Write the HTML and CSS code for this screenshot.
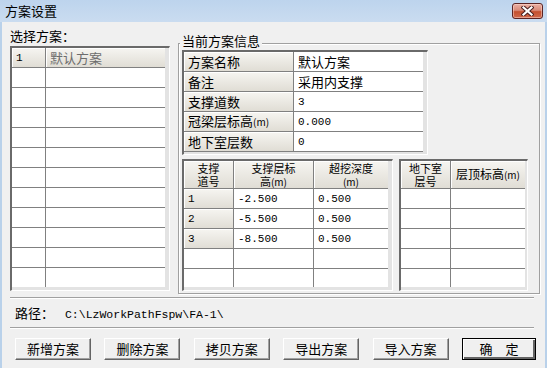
FILE: index.html
```html
<!DOCTYPE html>
<html lang="zh-CN">
<head>
  <meta charset="UTF-8" />
  <title>方案设置</title>
  <link rel="stylesheet" href="styles.css">
</head>
<body>
<div class="window">

  <!-- Title bar -->
  <div class="titlebar">
    <span class="title">方案设置</span>
    <button class="close-btn">
      <svg width="13" height="10" viewBox="0 0 13 10">
        <path d="M2.5 1.5 L10.5 8.5 M10.5 1.5 L2.5 8.5" stroke="#4a2020" stroke-width="4.2" stroke-linecap="square"/>
        <path d="M2.5 1.5 L10.5 8.5 M10.5 1.5 L2.5 8.5" stroke="#fff" stroke-width="2.2" stroke-linecap="square"/>
      </svg>
    </button>
  </div>

  <div class="main">
    <!-- Plan list -->
    <div class="plan-list">
      <div class="label">选择方案：</div>
      <div class="grid">
        <div class="grid-body plans-body">
          <table>
            <tr>
              <td class="fixed num w34">1</td>
              <td class="fixed muted w119">默认方案</td>
            </tr>
            <tr><td></td><td></td></tr>
            <tr><td></td><td></td></tr>
            <tr><td></td><td></td></tr>
            <tr><td></td><td></td></tr>
            <tr><td></td><td></td></tr>
            <tr><td></td><td></td></tr>
            <tr><td></td><td></td></tr>
            <tr><td></td><td></td></tr>
            <tr><td></td><td></td></tr>
            <tr><td></td><td></td></tr>
            <tr><td></td><td></td></tr>
          </table>
        </div>
      </div>
    </div>

    <!-- Current plan -->
    <div class="group">
      <span class="group-title">当前方案信息</span>

      <div class="grid info-grid">
        <div class="grid-body info-body">
          <table>
            <tr><td class="fixed w110">方案名称</td><td class="w129">默认方案</td></tr>
            <tr><td class="fixed">备注</td><td>采用内支撑</td></tr>
            <tr><td class="fixed">支撑道数</td><td class="num">3</td></tr>
            <tr><td class="fixed">冠梁层标高<span class="unit">(m)</span></td><td class="num">0.000</td></tr>
            <tr><td class="fixed">地下室层数</td><td class="num">0</td></tr>
          </table>
        </div>
      </div>

      <div class="lower">
        <div class="grid">
          <div class="grid-body lower-body">
            <table>
              <tr class="head-row">
                <td class="fixed head w50">支撑<br>道号</td>
                <td class="fixed head w80">支撑层标<br>高<span class="unit">(m)</span></td>
                <td class="fixed head w74">超挖深度<br><span class="unit">(m)</span></td>
              </tr>
              <tr><td class="fixed num">1</td><td class="num">-2.500</td><td class="num">0.500</td></tr>
              <tr><td class="fixed num">2</td><td class="num">-5.500</td><td class="num">0.500</td></tr>
              <tr><td class="fixed num">3</td><td class="num">-8.500</td><td class="num">0.500</td></tr>
              <tr><td></td><td></td><td></td></tr>
              <tr><td></td><td></td><td></td></tr>
            </table>
          </div>
        </div>

        <div class="grid grid-narrow">
          <div class="grid-body lower-body">
            <table>
              <tr class="head-row">
                <td class="fixed head w50">地下室<br>层号</td>
                <td class="fixed head single w74">层顶标高<span class="unit">(m)</span></td>
              </tr>
              <tr><td></td><td></td></tr>
              <tr><td></td><td></td></tr>
              <tr><td></td><td></td></tr>
              <tr><td></td><td></td></tr>
              <tr><td></td><td></td></tr>
            </table>
          </div>
        </div>
      </div>
    </div>
  </div>

  <div class="separator"></div>

  <div class="path-row">
    <span>路径：</span>
    <span class="path">C:\LzWorkPathFspw\FA-1\</span>
  </div>

  <div class="separator"></div>

  <!-- Buttons -->
  <div class="buttons">
    <button class="btn">新增方案</button>
    <button class="btn">删除方案</button>
    <button class="btn">拷贝方案</button>
    <button class="btn">导出方案</button>
    <button class="btn">导入方案</button>
    <button class="btn btn-default">确　定</button>
  </div>

</div>
</body>
</html>
```

FILE: styles.css
```css
* {
  box-sizing: border-box;
  margin: 0;
  padding: 0;
}

body {
  width: 547px;
  height: 368px;
  overflow: hidden;
  font-family: "Noto Sans CJK SC", sans-serif;
  font-size: 13px;
  color: #000;
  background: #f0f0f0;
}

.window {
  width: 547px;
  height: 368px;
  background: #f0f0f0;
  box-shadow: inset 2px 0 #b9d1ea, inset -2px 0 #b9d1ea;
}

/* title bar */
.titlebar {
  height: 22px;
  display: flex;
  align-items: flex-start;
  background: linear-gradient(#bdd4ed, #cadcf0);
}

.title {
  padding-left: 5px;
  line-height: 22px;
  font-size: 13px;
}

.close-btn {
  margin: 3px 4px 0 auto;
  width: 31px;
  height: 16px;
  padding: 0;
  border: 1px solid #5b2424;
  border-radius: 3px;
  background: linear-gradient(#eab0a4, #d98a78 45%, #c4502f 55%, #d0694d);
  box-shadow: inset 0 0 0 1px rgba(255, 220, 210, 0.5);
  display: flex;
  align-items: center;
  justify-content: center;
}

/* main area */
.main {
  display: flex;
  padding-left: 10px;
}

.plan-list {
  width: 160px;
  padding-top: 4px;
}

.label {
  height: 20px;
  line-height: 20px;
}

/* grid control look */
.grid {
  border-style: solid;
  border-width: 2px 1px 1px 2px;
  border-color: #6a6a6a #fff #fff #6a6a6a;
  background: #e3e3e3;
  padding: 0 4px 3px 0;
}

.grid-body {
  overflow: hidden;
}

.grid table {
  border-collapse: separate;
  border-spacing: 0;
  table-layout: fixed;
}

.grid td {
  height: 20px;
  padding: 0 0 0 4px;
  border-right: 1px solid #808080;
  border-bottom: 1px solid #808080;
  background: #fff;
  white-space: nowrap;
  overflow: hidden;
  font-size: 13px;
  line-height: 18px;
}

.grid td:last-child {
  border-right: 0;
}

.grid td.fixed {
  background: linear-gradient(#f6f5f1, #e0ddd5);
  box-shadow: inset 1px 1px #fff;
}

.grid td.num {
  font-family: "Liberation Mono", monospace;
  font-size: 11px;
}

.grid td.muted {
  color: #6d6d6d;
}

.unit {
  font-size: 10px;
}

.w34 { width: 34px; }
.w50 { width: 50px; }
.w74 { width: 74px; }
.w80 { width: 80px; }
.w110 { width: 110px; }
.w119 { width: 119px; }
.w129 { width: 129px; }

.plans-body {
  width: 153px;
  height: 239px;
}

/* group box */
.group {
  position: relative;
  margin: 21px 0 0 8px;
  width: 362px;
  height: 251px;
  border: 1px solid #a0a0a0;
  box-shadow: inset 1px 1px #fff, 1px 1px #fff;
  padding: 6px 0 0 3px;
}

.group-title {
  position: absolute;
  top: -11px;
  left: 1px;
  padding: 0 2px;
  line-height: 16px;
  background: #f0f0f0;
}

.info-grid {
  width: 246px;
  padding-bottom: 2px;
}

.info-body {
  height: 100px;
}

.lower {
  display: flex;
  gap: 6px;
  margin-top: 4px;
}

.lower-body {
  height: 126px;
}

.grid-narrow {
  padding-right: 2px;
}

.grid td.head {
  height: 28px;
  padding: 1px 0 0;
  text-align: center;
  vertical-align: top;
  font-size: 11px;
  line-height: 13px;
}

.grid td.head.single {
  padding: 0;
  vertical-align: middle;
  font-size: 12px;
  line-height: 16px;
}

/* bottom */
.separator {
  margin: 3px 13px 0 10px;
  height: 2px;
  border-top: 1px solid #a0a0a0;
  border-bottom: 1px solid #fff;
}

.path-row + .separator {
  margin-top: 0;
}

.path-row {
  height: 28px;
  line-height: 28px;
  padding-left: 15px;
}

.path {
  margin-left: 8px;
  font-family: "Liberation Mono", monospace;
  font-size: 11.5px;
}

.buttons {
  display: flex;
  justify-content: space-between;
  margin-top: 9px;
  padding: 0 11px 0 15px;
}

.btn {
  width: 76px;
  height: 22px;
  font-family: "Noto Sans CJK SC", sans-serif;
  font-size: 13px;
  line-height: 18px;
  background: #f0f0f0;
  border: 1px solid;
  border-color: #fff #646464 #646464 #fff;
  box-shadow: inset -1px -1px #a0a0a0;
}

.btn-default {
  width: 74px;
  border: 1px solid #000;
  box-shadow: inset 1px 1px #fff, inset -2px -2px #646464;
}
```
